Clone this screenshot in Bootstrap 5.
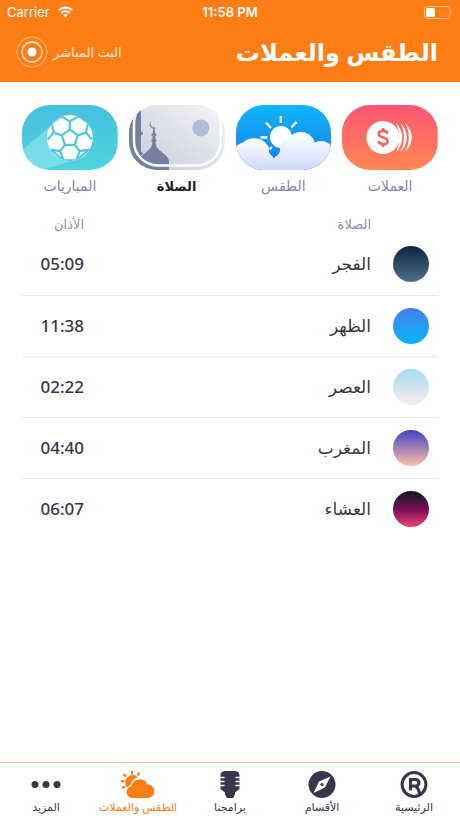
<!DOCTYPE html>
<html lang="ar" dir="rtl">
<head>
<meta charset="utf-8">
<meta name="viewport" content="width=device-width, initial-scale=1">
<title>الطقس والعملات</title>
<link rel="stylesheet" href="https://cdn.jsdelivr.net/npm/bootstrap@5.3.0/dist/css/bootstrap.min.css">
<style>
  body { font-family: "Noto Sans", "DejaVu Sans", sans-serif; color: #38364a; background: #fff; }
  .app-header { background: #ff7d15; color: #fff; }
  .status-bar { height: 24px; font: 13px/24px Inter, sans-serif; padding: 0 7px; }
  .status-bar > div { flex: 1 1 0; }
  .status-time { font-weight: 600; }
  .title-bar { height: 58px; padding: 0 22px 2px 16px; }
  .page-title { font-size: 24px; line-height: 40px; font-weight: 700; }
  .live-btn { color: #ffe9d8; font-size: 13px; line-height: 20px; gap: 5px; }
  .live-btn:hover { color: #fff; }
  .tiles { padding: 23px 22px 0; gap: 11px; }
  .tile { flex: 1 1 0; color: #8288a6; font-size: 14px; line-height: 20px; }
  .tile svg { width: 100%; height: 65px; border-radius: 28px; margin-bottom: 6px; }
  .tile.active { color: #222; font-size: 13px; font-weight: 700; }
  .prayers { margin: 0 22px; }
  .prayers table { table-layout: fixed; }
  .prayers th { font-weight: 400; text-align: start; }
  .prayers thead th { height: 38px; padding: 18px 0 0; font-size: 13px; line-height: 20px; color: #8a90a8; }
  .prayers tbody tr { height: 61px; border-bottom: 1px solid #e6e9ec; }
  .prayers tbody tr:last-child { border-bottom: 0; }
  .prayers tbody th, .prayers td { padding: 0; font-size: 17px; line-height: 24px; font-weight: 500; }
  .col-sky { width: 67px; }
  .col-time { width: 62px; }
  .sky { width: 36px; height: 36px; margin-inline-start: 9px; }
  .fajr { background: linear-gradient(#0d2343, #50708b); }
  .dhuhr { background: linear-gradient(#467fe8, #04b6fc); }
  .asr { background: linear-gradient(#a3ddf5, #faece9); }
  .maghrib { background: linear-gradient(#4043c4, #ffbea6); }
  .isha { background: linear-gradient(#1f1729 10%, #84125a 55%, #e8456d); }
  .bottom-nav { border-top: 1px solid #fbb88a; height: 56px; }
  .bottom-nav a { flex: 1 1 0; color: #38364a; font-size: 11px; line-height: 16px; padding-top: 7px; }
  .bottom-nav a.active { color: #ff7d15; }
  .bottom-nav svg { height: 29px; }
</style>
<script src="https://cdn.jsdelivr.net/npm/bootstrap@5.3.0/dist/js/bootstrap.bundle.min.js"></script>
</head>
<body class="d-flex flex-column min-vh-100">
<header class="app-header">
  <div class="status-bar d-flex align-items-center" dir="ltr">
    <div class="d-flex align-items-center gap-2"><span>Carrier</span>
      <svg width="15" height="12" viewBox="0 0 15 12" fill="none" stroke="#fff" stroke-width="2.1" aria-hidden="true"><path d="M.8 4.300a9.600 9.600 0 0 1 13.400 0M3.300 7a6 6 0 0 1 8.400 0"/><path d="M7.500 11.500 5.200 9a3.400 3.400 0 0 1 4.600 0z" fill="#fff" stroke="none"/></svg>
    </div>
    <div class="status-time text-center">11:58 PM</div>
    <div class="d-flex justify-content-end">
      <svg width="29" height="13" viewBox="0 0 29 13" fill="none" aria-hidden="true"><rect x=".5" y=".5" width="25.500" height="12" rx="3" stroke="#ffbe8a"/><rect x="2" y="2" width="9" height="9" rx="1.500" fill="#fff"/><path d="M27 4.500q1.500 2 0 4z" fill="#ffbe8a"/></svg>
    </div>
  </div>
  <div class="title-bar d-flex align-items-center justify-content-between">
    <h1 class="page-title m-0">الطقس والعملات</h1>
    <button type="button" class="live-btn btn p-0 border-0 d-flex align-items-center"><span>البث المباشر</span>
      <svg width="32" height="32" viewBox="0 0 32 32" fill="none" stroke="#fff" aria-hidden="true"><circle cx="16" cy="16" r="15" opacity=".5"/><circle cx="16" cy="16" r="10" stroke-width="1.300" opacity=".85"/><circle cx="16" cy="16" r="4.500" fill="#fff" stroke="none"/></svg>
    </button>
  </div>
</header>
<main class="flex-grow-1">
  <nav class="tiles d-flex" aria-label="الخدمات">
    <a href="#currency" class="tile text-center text-decoration-none">
      <svg class="d-block" viewBox="0 0 96 66" preserveAspectRatio="xMidYMid slice" aria-hidden="true">
        <defs><linearGradient id="gc" x2="0" y2="1"><stop stop-color="#fc5674"/><stop offset="1" stop-color="#ff8851"/></linearGradient></defs>
        <path fill="url(#gc)" d="M0 0h96v66H0z"/><circle cx="41" cy="33" r="16.500" fill="#fff"/>
        <g fill="#fff"><path d="M54 18q13 15 0 30 7-15 0-30zM58.500 18q13 15 0 30 7.500-15 0-30zM63 18q14 15 0 30 8-15 0-30z"/></g>
        <path d="M45.800 29c-.8-2-2.400-2.600-4.600-2.600-2.700 0-4.400 1.200-4.400 3.200 0 4.400 9 2.200 9 6.800 0 2.200-1.800 3.300-4.500 3.300s-4.300-1-4.900-3.100M41.200 23.500v3m0 13v3" fill="none" stroke="#f96262" stroke-width="2.600"/>
      </svg>العملات</a>
    <a href="#weather" class="tile text-center text-decoration-none">
      <svg class="d-block" viewBox="0 0 96 66" preserveAspectRatio="xMidYMid slice" aria-hidden="true">
        <defs><linearGradient id="gw" x2="0" y2="1"><stop stop-color="#10b7f8"/><stop offset="1" stop-color="#1877ee"/></linearGradient><linearGradient id="gl" x2="0" y2="1"><stop stop-color="#fff"/><stop offset="1" stop-color="#cdd9fa"/></linearGradient></defs>
        <path fill="url(#gw)" d="M0 0h96v66H0z"/>
        <circle cx="45" cy="32.500" r="11" fill="#fff"/>
        <path d="M45 11.500v7M60.500 17.500l-5 5.500M30 18l5 5.500M24.500 33h7M36 42.500l-4 4" stroke="#fff" stroke-width="2.400"/>
        <path d="M0 42c3-3 5-3 7-4 8-7 21-5 26 5l7 10-1 13H0z" fill="url(#gl)"/>
        <path d="M36 66c-1-9 0-16 8-19 0-9 4-14 10-14 5-8 21-8 25 5 7-3 13-1 17 4v24z" fill="url(#gl)"/>
        <path d="M33 44c1 3 6 2 11 0 0 7-3 6-6 10-1-3-6-4-5-10z" fill="#1688f0"/>
      </svg>الطقس</a>
    <a href="#prayer" class="tile active text-center text-decoration-none" aria-current="page">
      <svg class="d-block" viewBox="0 0 96 66" preserveAspectRatio="xMidYMid slice" aria-hidden="true">
        <defs><linearGradient id="gp" x1="1" x2="0" y2="1"><stop stop-color="#f6f6f9"/><stop offset="1" stop-color="#c5cad9"/></linearGradient></defs>
        <path fill="url(#gp)" d="M0 0h96v66H0z"/>
        <g fill="#7480a0"><path d="M0 0h12v27q4 2 0 4v16q4 2 0 4v15H0z"/><path d="M10 66v-9c1-6 7-8 11-13 2-2 2-4 2.500-7h-1v-2h1V31h-1v-1.500h1L25 20l1.500 9.500h1V31h-1v4h1v2h-1c.5 3 .5 5 2.500 7 4 5 11 7 11 13v9z"/></g>
        <path d="M22 16.500a4.300 4.300 0 1 0 6 6.500 4.700 4.700 0 0 1-6-6.500z" fill="#7480a0"/><circle cx="72" cy="23.500" r="8.500" fill="#b1bbd3"/>
        <rect x="5" y="-5" width="87" height="66" rx="24" fill="none" stroke="#fff" stroke-width="2.500"/>
      </svg>الصلاة</a>
    <a href="#matches" class="tile text-center text-decoration-none">
      <svg class="d-block" viewBox="0 0 96 66" preserveAspectRatio="xMidYMid slice" aria-hidden="true">
        <defs><linearGradient id="gm" x2="0" y2="1"><stop stop-color="#48bee2"/><stop offset="1" stop-color="#4ed5dc"/></linearGradient><clipPath id="ballClip"><circle cx="48" cy="33.500" r="23"/></clipPath></defs>
        <path fill="url(#gm)" d="M0 0h96v66H0z"/><path d="M0 46 29 21l23 35-34 10H0z" fill="#9beaf0" opacity=".55"/>
        <circle cx="48" cy="33.500" r="23" fill="#fff"/>
        <g clip-path="url(#ballClip)"><path transform="translate(48 33.500) scale(1.150) translate(-48 -33.500)" fill="none" stroke="#4ac9df" stroke-width="1.900" d="m48 26 7 5.200-2.700 8.300h-8.600L41 31.200zM48 26v-7M55 31.200l7-2.400M52.300 39.500l4.200 5.500M43.700 39.500 39.500 45M41 31.200l-7-2.400M48 19l-7.500-4.500M48 19l7.500-4.500M62 28.800l2-8.300M62 28.800l5.500 6M34 28.800l-2-8.300M34 28.800l-5.500 6M56.500 45l8.500-1.500M56.500 45l-3 8h-11l-3-8M39.500 45 31 43.500M55.500 14.500l8.500 6M40.500 14.500l-8.500 6M53.500 53l11.500-9.500M42.500 53 31 43.500"/></g>
      </svg>المباريات</a>
  </nav>
  <div class="prayers">
    <table class="w-100">
      <colgroup><col class="col-sky"><col><col class="col-time"></colgroup>
      <thead><tr><th></th><th scope="col">الصلاة</th><th scope="col">الأذان</th></tr></thead>
      <tbody>
        <tr><td><div class="sky fajr rounded-circle"></div></td><th scope="row">الفجر</th><td>05:09</td></tr>
        <tr><td><div class="sky dhuhr rounded-circle"></div></td><th scope="row">الظهر</th><td>11:38</td></tr>
        <tr><td><div class="sky asr rounded-circle"></div></td><th scope="row">العصر</th><td>02:22</td></tr>
        <tr><td><div class="sky maghrib rounded-circle"></div></td><th scope="row">المغرب</th><td>04:40</td></tr>
        <tr><td><div class="sky isha rounded-circle"></div></td><th scope="row">العشاء</th><td>06:07</td></tr>
      </tbody>
    </table>
  </div>
</main>
<nav class="bottom-nav d-flex bg-white sticky-bottom" aria-label="التنقل الرئيسي">
  <a href="#home" class="d-flex flex-column align-items-center text-decoration-none">
    <svg width="28" viewBox="0 0 28 28" fill="none" stroke="currentColor" aria-hidden="true"><circle cx="14" cy="14" r="11.900" stroke-width="3"/><path d="M10.500 20V9h5.200a3.200 3.200 0 0 1 0 6.500h-5M15.500 15.500q4 3 4 9" stroke-width="3.200"/></svg>الرئيسية</a>
  <a href="#sections" class="d-flex flex-column align-items-center text-decoration-none">
    <svg width="28" viewBox="0 0 28 28" aria-hidden="true"><circle cx="14" cy="14" r="13.500" fill="currentColor"/><path d="M22.500 6 17 17 5.500 22.500 11 11z" fill="#fff"/><circle cx="14" cy="14" r="1.600" fill="currentColor"/></svg>الأقسام</a>
  <a href="#shows" class="d-flex flex-column align-items-center text-decoration-none">
    <svg width="28" viewBox="0 0 28 28" fill="currentColor" aria-hidden="true"><path d="M4.500 5q0-4.500 5-4.500h9q5 0 5 4.500v13.500L19 22v2l-2 3.500h-6L9 24v-2l-4.500-3.500z"/><path d="M4 7h4.500M4 11h4.500M4 15h4.500M19.500 7H24M19.500 11H24M19.500 15H24" stroke="#fff" stroke-width="1.400"/></svg>برامجنا</a>
  <a href="#weather-currency" class="active d-flex flex-column align-items-center text-decoration-none" aria-current="page">
    <svg width="36" viewBox="0 0 36 28" fill="currentColor" aria-hidden="true"><path d="M5.500 14a7.500 7.500 0 0 1 12.500-7.200q-6 1-7 7.500-2.500.5-4 3-1-1.500-1.500-3.300z"/><path d="M12 4V.5M17.500 5l2-3M6 6 3.500 3.500M4.500 11 .8 10.500M5 16l-3 1.500" stroke="currentColor" stroke-width="2.200"/><path d="M12 27.500a6 6 0 0 1-.5-11.900 8.300 8.300 0 0 1 15.700-1.900A7 7 0 0 1 29 27.500z"/></svg>الطقس والعملات</a>
  <a href="#more" class="d-flex flex-column align-items-center text-decoration-none">
    <svg width="30" viewBox="0 0 30 28" fill="currentColor" aria-hidden="true"><circle cx="4" cy="14" r="3.500"/><circle cx="15" cy="14" r="3.500"/><circle cx="26" cy="14" r="3.500"/></svg>المزيد</a>
</nav>
</body>
</html>
